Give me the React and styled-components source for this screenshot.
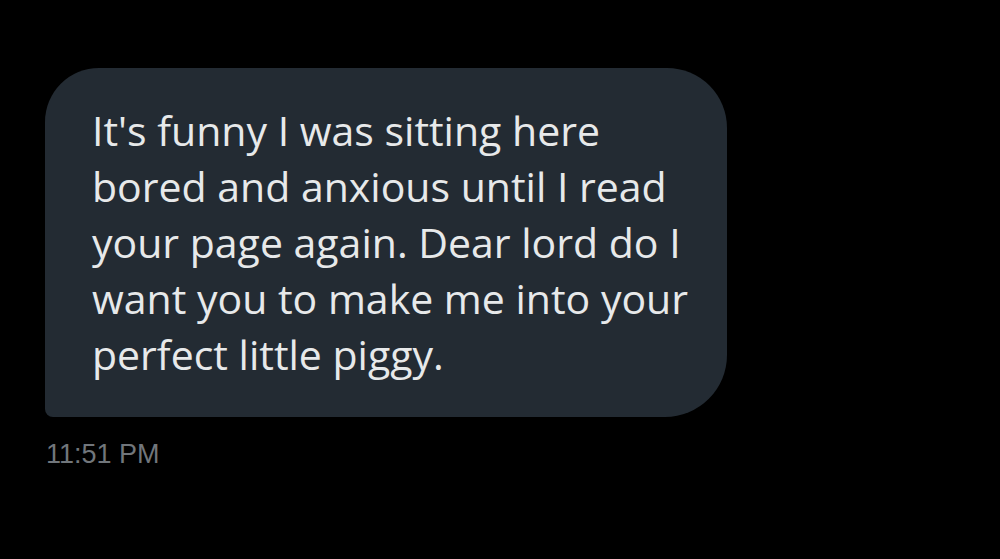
import React from "react";
import styled, { createGlobalStyle } from "styled-components";

const Global = createGlobalStyle`
  html, body { margin: 0; padding: 0; background: #000; }
  body { width: 1000px; height: 559px; overflow: hidden; }
`;

const Page = styled.div`
  width: 1000px;
  height: 559px;
  background: #000;
  box-sizing: border-box;
  padding: 68px 0 0 45px;
  display: flex;
  flex-direction: column;
  align-items: flex-start;
`;

const Bubble = styled.div`
  width: 682px;
  height: 349px;
  box-sizing: border-box;
  background: #232b33;
  border-radius: 54px 60px 62px 8px;
  padding: 34px 26px 0 47px;
  color: #e7e9ea;
  font-family: "Open Sans", "Noto Sans", sans-serif;
  font-size: 41px;
  line-height: 56px;
`;

const Time = styled.div`
  margin-top: 21px;
  margin-left: 1px;
  color: #71767b;
  font-family: "Liberation Sans", Arial, sans-serif;
  font-size: 27px;
  line-height: 32px;
`;

export default function App() {
  return (
    <>
      <Global />
      <Page>
        <Bubble>
          It's funny I was sitting here bored and anxious until I read your page again. Dear lord do I want you to make me into your perfect little piggy.
        </Bubble>
        <Time>11:51 PM</Time>
      </Page>
    </>
  );
}
